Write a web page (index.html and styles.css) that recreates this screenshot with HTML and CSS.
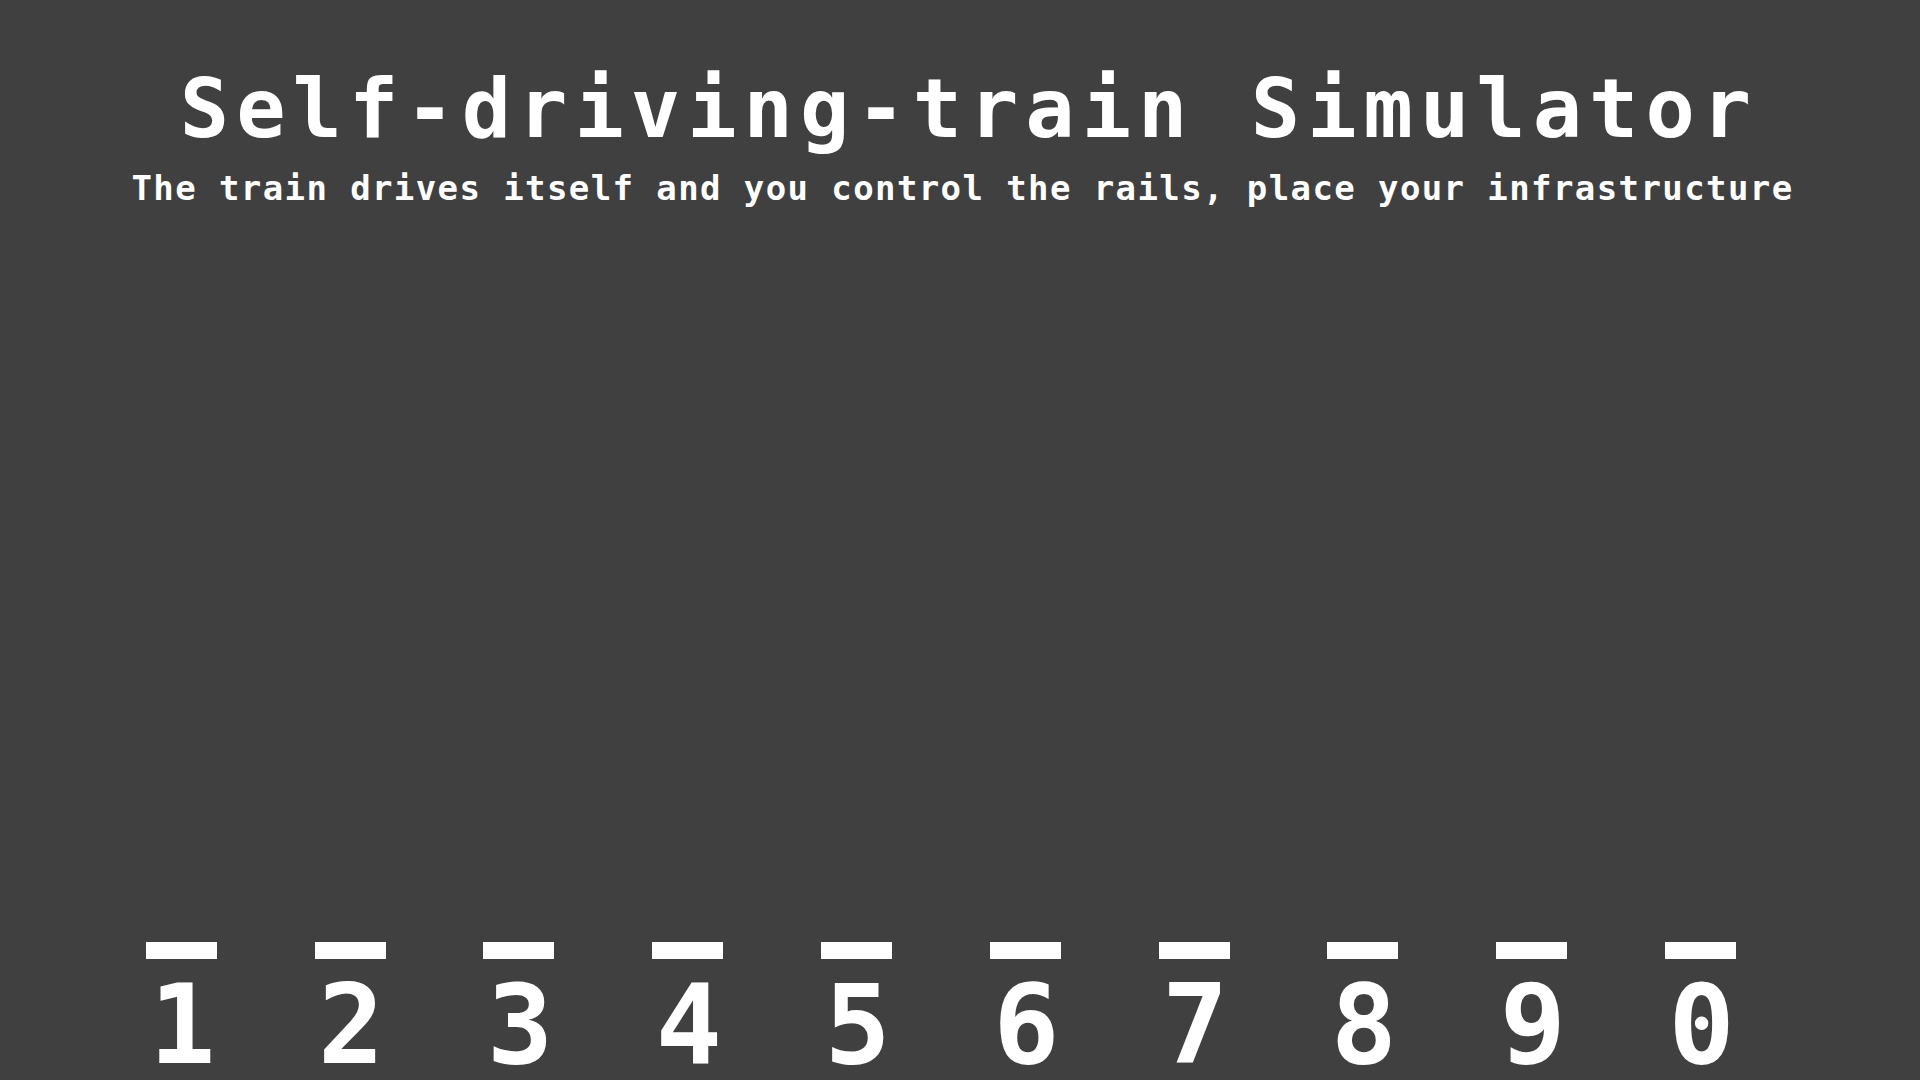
FILE: index.html
```html
<!DOCTYPE html>
<html lang="en">
<head>
<meta charset="utf-8">
<title>Self-driving-train Simulator</title>
<link rel="stylesheet" href="styles.css">
</head>
<body>
<main class="screen">
  <header class="header">
    <h1 class="title">Self-driving-train Simulator</h1>
    <p class="subtitle">The train drives itself and you control the rails, place your infrastructure</p>
  </header>
  <nav class="hotbar">
    <div class="slot"><span class="bar"></span><span class="key">1</span></div>
    <div class="slot"><span class="bar"></span><span class="key">2</span></div>
    <div class="slot"><span class="bar"></span><span class="key">3</span></div>
    <div class="slot"><span class="bar"></span><span class="key">4</span></div>
    <div class="slot"><span class="bar"></span><span class="key">5</span></div>
    <div class="slot"><span class="bar"></span><span class="key">6</span></div>
    <div class="slot"><span class="bar"></span><span class="key">7</span></div>
    <div class="slot"><span class="bar"></span><span class="key">8</span></div>
    <div class="slot"><span class="bar"></span><span class="key">9</span></div>
    <div class="slot"><span class="bar"></span><span class="key">0</span></div>
  </nav>
</main>
</body>
</html>
```
FILE: styles.css
```css
html, body {
  margin: 0;
  padding: 0;
  background: #404040;
  overflow: hidden;
}

.screen {
  height: 100vh;
  display: flex;
  flex-direction: column;
  color: #ffffff;
  font-family: "DejaVu Sans Mono", "Liberation Mono", monospace;
  font-weight: bold;
}

.header {
  display: flex;
  flex-direction: column;
  align-items: center;
  padding-top: 68px;
}

.title {
  margin: 0;
  font-size: 82px;
  line-height: 82px;
  letter-spacing: 7px;
  padding-left: 18px;
  font-weight: bold;
  white-space: nowrap;
}

.subtitle {
  margin: 21px 0 0 0;
  font-size: 34px;
  line-height: 34px;
  letter-spacing: 1.4px;
  padding-left: 5px;
  white-space: nowrap;
}

.hotbar {
  margin-top: auto;
  display: grid;
  grid-template-columns: repeat(10, 168.8px);
  padding-left: 97px;
}

.slot {
  display: flex;
  flex-direction: column;
  align-items: center;
  gap: 11px;
}

.bar {
  display: block;
  width: 71px;
  height: 17px;
  background: #ffffff;
}

.key {
  display: block;
  font-size: 110px;
  line-height: 110px;
  padding-left: 2px;
}
```
